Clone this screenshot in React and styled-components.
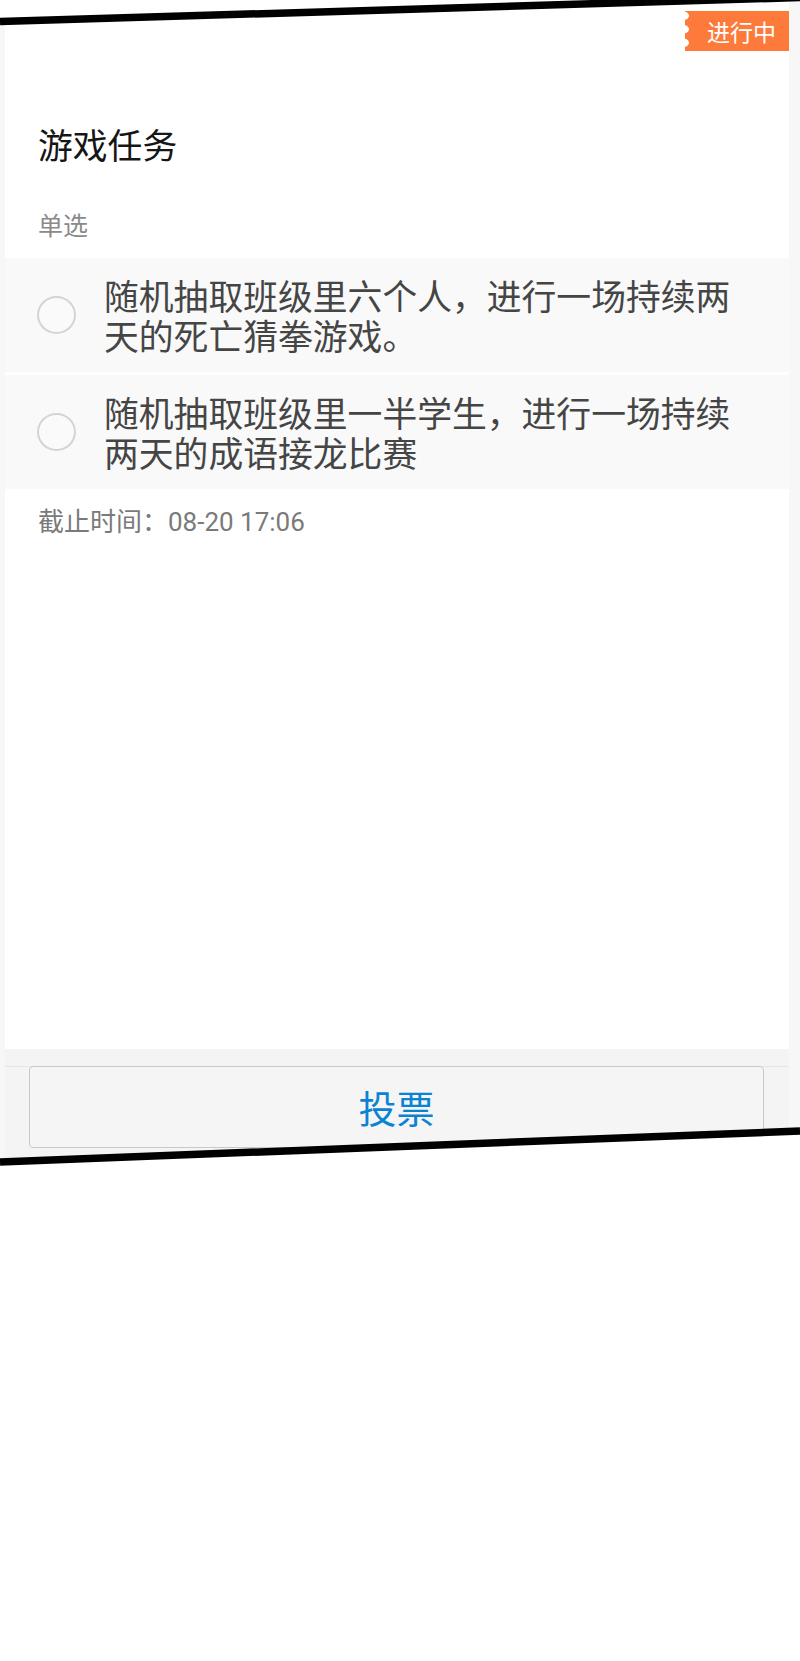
import React from "react";
import styled, { createGlobalStyle } from "styled-components";

const Global = createGlobalStyle`
  html, body { margin: 0; padding: 0; background: #ffffff; }
  body { font-family: "Noto Sans CJK SC", "Noto Sans", sans-serif; }
  * { box-sizing: border-box; }
`;

const Page = styled.div`
  position: relative;
  width: 800px;
  height: 1661px;
  background: #ffffff;
`;

const Screen = styled.div`
  height: 1170px;
  padding: 0 11px 0 5px;
  background: #f7f7f7;
  display: flex;
  flex-direction: column;
  clip-path: polygon(0 21px, 800px -3px, 800px 1131px, 0 1162px);
`;

const Card = styled.div`
  flex: 1;
  display: flex;
  flex-direction: column;
  background: #ffffff;
`;

const Header = styled.header`
  padding: 120px 32px 16px 33px;
  display: flex;
  flex-direction: column;
  gap: 38px;
`;

const Title = styled.h1`
  margin: 0;
  font-size: 34.8px;
  line-height: 48px;
  font-weight: 400;
  color: #161616;
`;

const Kind = styled.div`
  font-size: 25px;
  line-height: 36px;
  color: #8a8a8a;
`;

const Options = styled.div`
  display: flex;
  flex-direction: column;
  gap: 3px;
`;

const Option = styled.label`
  display: flex;
  align-items: center;
  gap: 28px;
  height: 114px;
  padding: 0 42px 0 32px;
  background: #f9f9f9;
`;

const Radio = styled.span`
  flex: 0 0 auto;
  width: 39px;
  height: 38px;
  border-radius: 50%;
  border: 2px solid #d4d4d4;
  background: #fafafa;
`;

const OptionText = styled.span`
  font-size: 34.8px;
  line-height: 40px;
  color: #454545;
`;

const Deadline = styled.div`
  padding: 15px 33px 0;
  font-family: Roboto, "Noto Sans CJK SC", sans-serif;
  font-size: 26px;
  line-height: 36px;
  color: #7a7a7a;
`;

const Body = styled.div`
  flex: 1;
`;

const Footer = styled.footer`
  height: 121px;
  padding-top: 17px;
  background: #f4f4f4;
`;

const ButtonBar = styled.div`
  border-top: 1px solid #e6e6e6;
  padding: 0 25px 0 24px;
`;

const VoteButton = styled.button`
  display: block;
  width: 100%;
  height: 82px;
  margin-top: -1px;
  border: 1.5px solid #c9c9c9;
  border-radius: 4px;
  background: #f5f5f5;
  color: #0a84d2;
  font-family: "Noto Sans CJK SC", sans-serif;
  font-size: 38px;
  line-height: 1;
  padding: 0;
`;

const Badge = styled.div`
  position: absolute;
  top: 11px;
  right: 11px;
  width: 104px;
  height: 40px;
  padding: 0 12px 0 22px;
  background: #fd7a3b;
  color: #ffffff;
  font-size: 23px;
  line-height: 40px;
  white-space: nowrap;
  &::before {
    content: "";
    position: absolute;
    left: 0;
    top: 0;
    width: 8px;
    height: 100%;
    background: radial-gradient(circle at 0 50%, #ffffff 3.5px, transparent 4.2px) 0 -2px / 8px 13.5px repeat-y;
  }
`;

const Tear = styled.svg`
  position: absolute;
  left: 0;
  top: 0;
  pointer-events: none;
`;

const options = [
  "随机抽取班级里六个人，进行一场持续两天的死亡猜拳游戏。",
  "随机抽取班级里一半学生，进行一场持续两天的成语接龙比赛",
];

export default function App() {
  return (
    <Page>
      <Global />
      <Screen>
        <Card>
          <Body>
            <Header>
              <Title>游戏任务</Title>
              <Kind>单选</Kind>
            </Header>
            <Options>
              {options.map((t) => (
                <Option key={t}>
                  <Radio />
                  <OptionText>{t}</OptionText>
                </Option>
              ))}
            </Options>
            <Deadline>截止时间：08-20 17:06</Deadline>
          </Body>
          <Footer>
            <ButtonBar>
              <VoteButton>投票</VoteButton>
            </ButtonBar>
          </Footer>
        </Card>
      </Screen>
      <Badge>进行中</Badge>
      <Tear width="800" height="1200" viewBox="0 0 800 1200">
        <line x1="0" y1="21.5" x2="800" y2="-2.5" stroke="#000" strokeWidth="7.5" />
        <line x1="0" y1="1162" x2="800" y2="1131" stroke="#000" strokeWidth="7.5" />
      </Tear>
    </Page>
  );
}
